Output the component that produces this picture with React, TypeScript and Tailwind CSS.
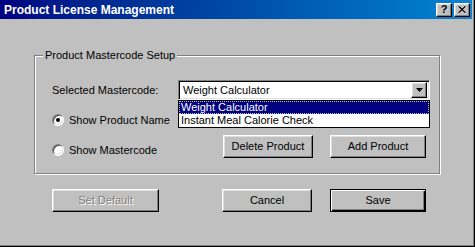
import React from "react";

// classic 3D button face
const raised =
  "border border-t-white border-l-white border-r-black border-b-black shadow-[inset_-1px_-1px_0_#808080,inset_1px_1px_0_#dfdfdf]";

interface BtnProps {
  label: string;
  width: string;
  isDefault?: boolean;
  disabled?: boolean;
}

const Btn = ({ label, width, isDefault, disabled }: BtnProps) => (
  <button
    className={`${width} h-[23px] bg-[#c0c0c0] text-[11px] leading-none flex items-center justify-center ${
      isDefault
        ? "border border-black shadow-[inset_1px_1px_0_white,inset_-1px_-1px_0_black,inset_-2px_-2px_0_#808080]"
        : raised
    } ${disabled ? "text-[#808080] [text-shadow:1px_1px_0_white]" : "text-black"}`}
  >
    {label}
  </button>
);

const Radio = ({ checked, label }: { checked?: boolean; label: string }) => (
  <label className="flex items-center h-[14px]">
    <span className="w-[12px] h-[12px] rounded-full bg-white border border-t-[#808080] border-l-[#808080] border-r-white border-b-white shadow-[inset_1px_1px_0_#404040,inset_-1px_-1px_0_#dfdfdf] flex items-center justify-center">
      {checked && <span className="w-[4px] h-[4px] rounded-full bg-black" />}
    </span>
    <span className="ml-[5px] text-[11px] leading-[14px]">{label}</span>
  </label>
);

const TitleButton = ({ children }: { children: React.ReactNode }) => (
  <div className={`w-[16px] h-[14px] bg-[#c0c0c0] ${raised} flex items-center justify-center`}>
    {children}
  </div>
);

export default function App() {
  const items = ["Weight Calculator", "Instant Meal Calorie Check"];

  return (
    <div
      className="w-[475px] h-[247px] bg-[#c0c0c0] border-r border-b border-black shadow-[inset_-1px_-1px_0_#808080] flex flex-col text-black"
      style={{ fontFamily: '"Liberation Sans", Arial, sans-serif' }}
    >
      {/* Title bar */}
      <div className="h-[19px] mr-[2px] bg-gradient-to-r from-[#000080] to-[#1084d0] flex items-center pl-[4px] pr-[2px]">
        <span className="text-white font-bold text-[12px] leading-none">Product License Management</span>
        <div className="ml-auto flex gap-[2px]">
          <TitleButton>
            <span className="font-bold text-[11px] leading-none">?</span>
          </TitleButton>
          <TitleButton>
            <svg width="8" height="7" viewBox="0 0 8 7">
              <path d="M0.5 0.5 L7 6.5 M1.5 0.5 L7.5 6.5 M7 0.5 L0.5 6.5 M7.5 0.5 L1 6.5" stroke="black" strokeWidth="1" />
            </svg>
          </TitleButton>
        </div>
      </div>

      {/* Body */}
      <div className="pl-[34px] pt-[29px]">
        <fieldset className="w-[406px] h-[126px] border border-[#808080] shadow-[inset_1px_1px_0_white,1px_1px_0_white] pl-[17px] pt-[18px]">
          <legend className="-ml-[9px] px-[2px] bg-[#c0c0c0] text-[11px] leading-[14px]">Product Mastercode Setup</legend>

          <div className="flex items-center h-[20px]">
            <span className="w-[126px] text-[11px]">Selected Mastercode:</span>
            <div className="relative w-[252px] h-[20px]">
              <div className="h-full bg-white border border-t-[#808080] border-l-[#808080] border-r-white border-b-white shadow-[inset_1px_1px_0_black,inset_-1px_-1px_0_#dfdfdf] flex items-center pl-[4px] pr-[2px]">
                <span className="text-[11px]">Weight Calculator</span>
                <div className={`ml-auto w-[16px] h-[16px] bg-[#c0c0c0] ${raised} flex items-center justify-center`}>
                  <svg width="7" height="4" viewBox="0 0 7 4">
                    <path d="M0 0 H7 L3.5 4 Z" fill="black" />
                  </svg>
                </div>
              </div>
              {/* open list */}
              <ul className="absolute left-0 top-full w-full bg-white border border-black z-10">
                {items.map((it, i) => (
                  <li
                    key={it}
                    className={`h-[13px] text-[11px] leading-[13px] pl-[2px] ${
                      i === 0 ? "bg-[#000080] text-white outline outline-1 outline-dotted outline-[#c0c0c0] -outline-offset-1" : ""
                    }`}
                  >
                    {it}
                  </li>
                ))}
              </ul>
            </div>
          </div>

          <div className="flex">
            <div className="w-[171px] flex flex-col pt-[13px] gap-[16px]">
              <Radio checked label="Show Product Name" />
              <Radio label="Show Mastercode" />
            </div>
            <div className="flex gap-[17px] pt-[35px]">
              <Btn label="Delete Product" width="w-[90px]" />
              <Btn label="Add Product" width="w-[96px]" />
            </div>
          </div>
        </fieldset>

        <div className="flex mt-[15px] pl-[18px]">
          <Btn label="Set Default" width="w-[107px]" disabled />
          <div className="ml-[63px] flex gap-[18px]">
            <Btn label="Cancel" width="w-[90px]" />
            <Btn label="Save" width="w-[96px]" isDefault />
          </div>
        </div>
      </div>
    </div>
  );
}
